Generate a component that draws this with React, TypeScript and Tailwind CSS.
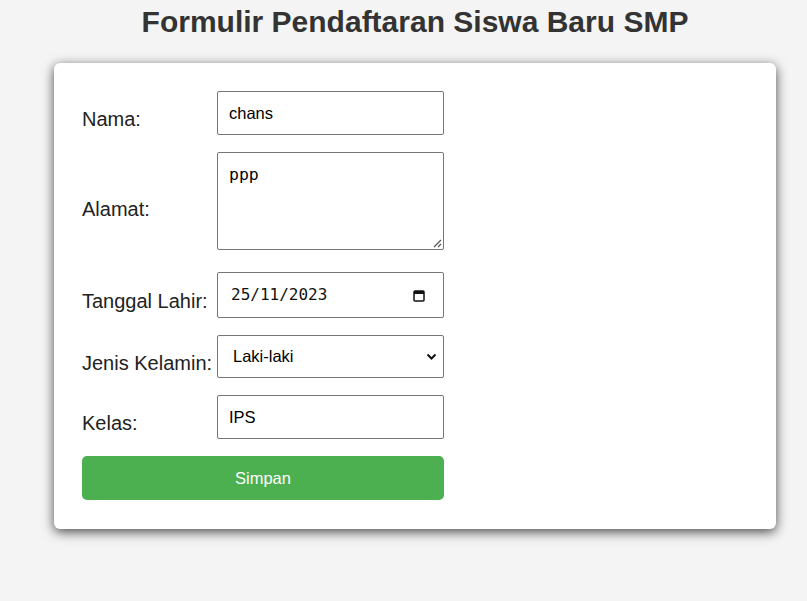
import React, { useState } from 'react';

const labelCls = 'w-[135px] shrink-0 text-[20px] text-[#222]';
const boxCls =
  'w-[227px] border border-[#767676] rounded-[2px] bg-white text-[16.5px] text-black outline-none';

function Row({
  label,
  children,
  extra = '',
  pad = 'pt-[12px]',
}: {
  label: string;
  children: React.ReactNode;
  extra?: string;
  pad?: string;
}) {
  return (
    <div className={`flex items-center ${extra}`}>
      <label className={`${labelCls} ${pad}`}>{label}</label>
      {children}
    </div>
  );
}

export default function App() {
  const [nama, setNama] = useState('chans');
  const [alamat, setAlamat] = useState('ppp');
  const [kelamin, setKelamin] = useState('Laki-laki');
  const [kelas, setKelas] = useState('IPS');

  return (
    <div
      className="min-h-screen bg-[#f4f4f4] pl-[23px] pt-[5px]"
      style={{ fontFamily: '"Liberation Sans", Arial, sans-serif' }}
    >
      <h1 className="text-center text-[30px] font-bold text-[#333] leading-[34px]">
        Formulir Pendaftaran Siswa Baru SMP
      </h1>

      <div className="mx-auto mt-[24px] w-[722px] bg-white rounded-[6px] shadow-[0_3px_12px_rgba(0,0,0,0.7)] pt-[28px] pb-[29px] px-[28px]">
        <Row label="Nama:">
          <input
            value={nama}
            onChange={(e) => setNama(e.target.value)}
            className={`${boxCls} h-[44px] px-[11px]`}
          />
        </Row>

        <Row label="Alamat:" extra="mt-[17px]" pad="pt-[16px]">
          <div className="relative">
            <textarea
              value={alamat}
              onChange={(e) => setAlamat(e.target.value)}
              className={`${boxCls} h-[98px] block resize-none px-[11px] pt-[10px] text-[15px]`}
              style={{ fontFamily: '"DejaVu Sans Mono", monospace' }}
            />
            <svg className="absolute right-[2px] bottom-[2px]" width="9" height="9" viewBox="0 0 9 9">
              <path d="M8 1L1 8M8 5L5 8" stroke="#555" strokeWidth="1.2" />
            </svg>
          </div>
        </Row>

        <Row label="Tanggal Lahir:" extra="mt-[22px]">
          <div className={`${boxCls} h-[46px] flex items-center justify-between pl-[13px] pr-[18px]`}>
            <span className="text-[16px] text-[#111]" style={{ fontFamily: '"DejaVu Sans Mono", monospace' }}>
              25/11/2023
            </span>
            <svg width="12" height="13" viewBox="0 0 12 13">
              <rect x="1" y="2" width="10" height="10" rx="1" fill="none" stroke="#111" strokeWidth="1.5" />
              <rect x="1" y="2" width="10" height="3" fill="#111" />
            </svg>
          </div>
        </Row>

        <Row label="Jenis Kelamin:" extra="mt-[17px]">
          <div className="relative">
            <select
              value={kelamin}
              onChange={(e) => setKelamin(e.target.value)}
              className={`${boxCls} h-[43px] block appearance-none pl-[15px]`}
            >
              <option>Laki-laki</option>
              <option>Perempuan</option>
            </select>
            <svg
              className="absolute right-[7px] top-[18px] pointer-events-none"
              width="11"
              height="8"
              viewBox="0 0 11 8"
            >
              <path d="M1.5 1.5L5.5 5.5L9.5 1.5" fill="none" stroke="#111" strokeWidth="2" />
            </svg>
          </div>
        </Row>

        <Row label="Kelas:" extra="mt-[17px]">
          <input
            value={kelas}
            onChange={(e) => setKelas(e.target.value)}
            className={`${boxCls} h-[44px] px-[11px]`}
          />
        </Row>

        <button className="mt-[17px] w-[362px] h-[44px] rounded-[5px] bg-[#4caf50] text-white text-[16.5px]">
          Simpan
        </button>
      </div>
    </div>
  );
}
